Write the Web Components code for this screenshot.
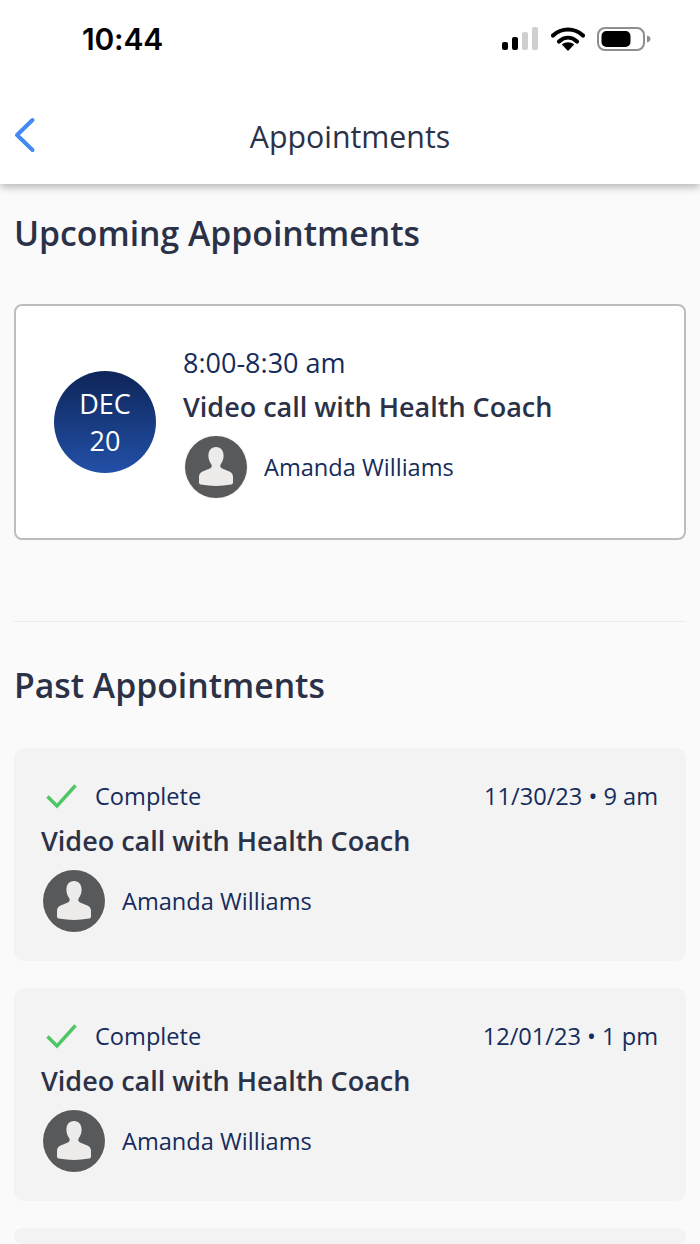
<!DOCTYPE html>
<html lang="en">
<head>
<meta charset="utf-8">
<title>Appointments</title>
<style>
  html, body { margin: 0; height: 100%; }
  body {
    width: 700px; height: 1244px; overflow: hidden;
    background: #fafafa;
    font-family: "Open Sans", "Noto Sans", sans-serif;
    color: #252b42;
  }
</style>
</head>
<body>
<app-status-bar></app-status-bar>
<app-header>Appointments</app-header>
<app-section-title style="--top:25px;--bottom:47px">Upcoming Appointments</app-section-title>
<upcoming-card month="DEC" day="20" time="8:00-8:30 am" title="Video call with Health Coach" coach="Amanda Williams"></upcoming-card>
<app-divider></app-divider>
<app-section-title style="--top:39px;--bottom:39px">Past Appointments</app-section-title>
<past-card date="11/30/23 • 9 am" title="Video call with Health Coach" coach="Amanda Williams"></past-card>
<past-card date="12/01/23 • 1 pm" title="Video call with Health Coach" coach="Amanda Williams"></past-card>
<past-card class="cut"></past-card>

<script>
(function () {
  'use strict';

  function define(name, css, html) {
    customElements.define(name, class extends HTMLElement {
      constructor() {
        super();
        this.attachShadow({ mode: 'open' });
      }
      connectedCallback() {
        const text = attr => this.getAttribute(attr) || '';
        this.shadowRoot.innerHTML = `<style>${css}</style>${html(text)}`;
      }
    });
  }

  define('coach-avatar', `
    :host { display: block; width: 64px; height: 64px; flex: none; }
    svg { display: block; }
  `, () => `
    <svg width="64" height="64" viewBox="0 0 64 64">
      <circle cx="32" cy="32" r="32" fill="#f6f6f6"/>
      <circle cx="32" cy="32" r="31" fill="#58595b"/>
      <path fill="#edecea" d="M32 12c-5 0-7.600 3.800-7.600 8.800 0 3.600 1.300 6.400 2.900 8.500.7 1 .5 2.900-.6 3.600-2.200 1.300-5.500 2.300-8.200 3.600-2.300 1.100-3.500 2.900-3.500 5.400v5.700c0 1.100.6 1.800 1.700 2 5.300.9 10.300 1.300 15.300 1.300s10-.4 15.300-1.300c1.100-.2 1.700-.9 1.700-2v-5.700c0-2.500-1.200-4.300-3.500-5.400-2.700-1.300-6-2.300-8.200-3.600-1.100-.7-1.300-2.600-.6-3.600 1.600-2.100 2.900-4.900 2.900-8.500C39.600 15.800 37 12 32 12z"/>
    </svg>
  `);

  define('app-status-bar', `
    :host {
      display: flex; align-items: center; justify-content: space-between;
      position: relative; z-index: 1;
      height: 78px; box-sizing: border-box; background: #fff;
      padding: 0 49px 0 82px; color: #000;
    }
    .time { font: 600 30px/1 Inter, Roboto, sans-serif; letter-spacing: -.2px; }
    .icons { display: flex; align-items: center; }
    .wifi { margin: 0 12px; }
    svg { display: block; }
  `, () => `
    <span class="time">10:44</span>
    <span class="icons">
      <svg width="38" height="24" viewBox="0 0 38 24">
        <rect x="1" y="15" width="6" height="8" rx="2" fill="#000"/>
        <rect x="11" y="10" width="6" height="13" rx="2" fill="#000"/>
        <rect x="21" y="5" width="6" height="18" rx="2" fill="#cfcfcf"/>
        <rect x="31" y="0" width="6" height="23" rx="2" fill="#cfcfcf"/>
      </svg>
      <svg class="wifi" width="34" height="24" viewBox="0 0 34 24">
        <path d="M2 8.500C10.500 .5 23.500 .5 32 8.500" fill="none" stroke="#000" stroke-width="4.200" stroke-linecap="round"/>
        <path d="M8 14.500C13.500 9.500 20.500 9.500 26 14.500" fill="none" stroke="#000" stroke-width="4.200" stroke-linecap="round"/>
        <path d="M17 24l-6.200-6.400c3.600-3 8.800-3 12.400 0z" fill="#000"/>
      </svg>
      <svg width="54" height="24" viewBox="0 0 54 24">
        <rect x="1" y="1" width="46" height="22" rx="7" fill="none" stroke="#8e8e8e" stroke-width="2"/>
        <rect x="4.500" y="4" width="29" height="16" rx="5" fill="#000"/>
        <path d="M50 8.500c2.200.6 3.500 1.900 3.500 3.500s-1.300 2.900-3.500 3.500z" fill="#8e8e8e"/>
      </svg>
    </span>
  `);

  define('app-header', `
    :host {
      display: flex; align-items: center; justify-content: center;
      position: relative; height: 106px; box-sizing: border-box;
      background: #fff;
      box-shadow: 0 3px 8px rgba(0,0,0,.28);
      font-size: 30.300px; font-weight: 400; color: #2b3147;
    }
    svg { position: absolute; left: 11px; top: 39px; display: block; }
    span { margin-top: 10px; }
  `, () => `
    <svg width="26" height="36" viewBox="0 0 26 36">
      <path d="M21.500 3L6 18l15.500 15" fill="none" stroke="#4289f4" stroke-width="4" stroke-linecap="round" stroke-linejoin="round"/>
    </svg>
    <span><slot></slot></span>
  `);

  define('app-section-title', `
    :host {
      display: block; padding: var(--top) 14px var(--bottom);
      font-size: 33.750px; line-height: 48px; font-weight: 600; color: #2b3147;
    }
  `, () => `<slot></slot>`);

  define('app-divider', `
    :host { display: block; height: 1px; margin: 81px 14px 0; background: #ececec; }
  `, () => ``);

  define('upcoming-card', `
    :host {
      display: flex; align-items: center; gap: 27px;
      height: 236px; box-sizing: border-box; margin: 0 14px;
      padding: 0 0 0 38px; background: #fff;
      border: 2px solid #bdbdbd; border-radius: 8px;
    }
    .date {
      width: 102px; height: 102px; flex: none; border-radius: 50%;
      display: flex; flex-direction: column; align-items: center; justify-content: center;
      background: linear-gradient(#0e2558, #2250a8);
      color: #fff; font-size: 27px; line-height: 37px;
    }
    .info { margin-top: -1px; }
    .time { font-size: 27px; line-height: 38px; color: #152c5b; }
    .title { font-size: 27px; line-height: 48px; margin-top: 1px; font-weight: 600; color: #2b3147; }
    .coach {
      display: flex; align-items: center; gap: 16px; margin: 4px 0 0 1px;
      font-size: 23.600px; color: #152c5b;
    }
  `, text => `
    <div class="date"><span>${text('month')}</span><span>${text('day')}</span></div>
    <div class="info">
      <div class="time">${text('time')}</div>
      <div class="title">${text('title')}</div>
      <div class="coach"><coach-avatar></coach-avatar><span>${text('coach')}</span></div>
    </div>
  `);

  define('past-card', `
    :host {
      display: block; height: 213px; box-sizing: border-box;
      margin: 0 14px 27px; padding: 28px 28px 0 27px;
      background: #f3f3f3; border-radius: 10px;
    }
    :host(.cut) { height: 16px; margin-bottom: 0; padding: 0; }
    .row { display: flex; align-items: center; justify-content: space-between; height: 40px; }
    .status { display: flex; align-items: center; gap: 17px; font-size: 23.600px; color: #152c5b; }
    .date { font-size: 23.600px; color: #152c5b; }
    svg { display: block; margin-left: 4px; }
    .title { font-size: 27px; line-height: 50px; font-weight: 600; color: #2b3147; }
    .coach {
      display: flex; align-items: center; gap: 16px; margin: 3px 0 0 1px;
      font-size: 23.600px; color: #152c5b;
    }
  `, text => text('title') ? `
    <div class="row">
      <span class="status">
        <svg width="33" height="26" viewBox="0 0 33 26">
          <path d="M2.500 13.500l9.500 9.500L30.500 2.500" fill="none" stroke="#4fc664" stroke-width="3.400"/>
        </svg>
        <span>Complete</span>
      </span>
      <span class="date">${text('date')}</span>
    </div>
    <div class="title">${text('title')}</div>
    <div class="coach"><coach-avatar></coach-avatar><span>${text('coach')}</span></div>
  ` : ``);
})();
</script>
</body>
</html>
